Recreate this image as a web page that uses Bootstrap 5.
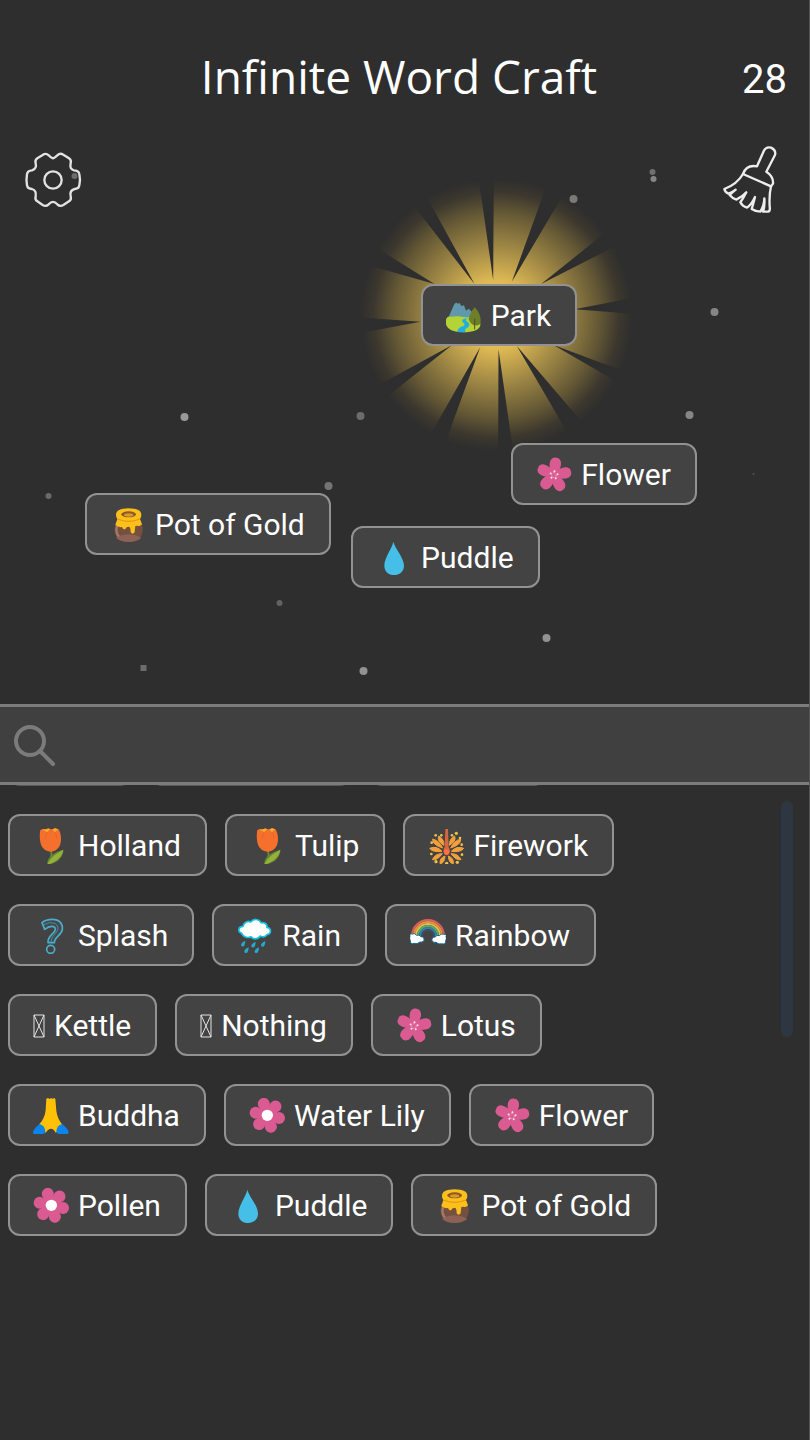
<!DOCTYPE html>
<html lang="en">
<head>
<meta charset="utf-8">
<meta name="viewport" content="width=device-width, initial-scale=1">
<title>Infinite Word Craft</title>
<link href="https://cdn.jsdelivr.net/npm/bootstrap@5.3.0/dist/css/bootstrap.min.css" rel="stylesheet">
<style>
  body { background: #2e2e2e; color: #fff; font-family: Roboto, "Noto Sans", sans-serif; border-right: 1px solid #555; }
  .board { min-height: 620px; }
  .board-head { padding: 44px 22px 0 11px; height: 108px; }
  .game-title { font-family: "Open Sans", "Noto Sans", sans-serif; font-size: 46px; line-height: 64px; font-weight: 400; }
  .found-count { font-size: 40px; line-height: 64px; }
  .tool-row { padding: 36px 28px 0 24px; }
  .tool-btn { background: none; border: 0; padding: 0; line-height: 0; }
  .sky { pointer-events: none; }
  .word { display: inline-flex; align-items: center; gap: 9px; height: 62px; padding: 2px 24px 0 23px; border: 2px solid #929292; border-radius: 12px;
    background: #434343; color: #fff; font-size: 30px; line-height: 36px; white-space: nowrap; }
  .word svg { width: 36px; height: 36px; overflow: visible; flex: none; }
  .word svg.missing { width: 12px; height: 24px; }
  .placed { position: absolute; }
  .at-park { left: 52%; top: 284px; }
  .at-flower { left: 63.2%; top: 443px; }
  .at-pot { left: 10.5%; top: 493px; }
  .at-puddle { left: 43.4%; top: 526px; }
  .search-bar { background: #404040; border-top: 3px solid #7c7c7c; border-bottom: 3px solid #7c7c7c; height: 81px; padding-left: 14px; }
  .search-bar input { background: transparent; border: 0; color: #fff; font-size: 30px; outline: 0; }
  .shelf { padding: 0 60px 204px 8px; }
  .shelf-words { gap: 28px 18px; margin-top: -61px; }
  .word-a { width: 124px; } .word-b { width: 202px; } .word-c { width: 176px; }
  .word-a, .word-b, .word-c { border-color: #5a5a5a; }
  .thumb { right: 16px; top: 16px; width: 12px; height: 236px; border-radius: 6px; background: #2e3741; }
</style>
</head>
<body class="d-flex flex-column min-vh-100 overflow-x-hidden">

<svg width="0" height="0" class="position-absolute" aria-hidden="true">
  <symbol id="tulip" viewBox="0 0 108 108">
    <path d="M54 66C57 80 55 90 50 100" fill="none" stroke="#6f8d2c" stroke-width="5"/>
    <path d="M43 110C41 90 58 74 91 65C92 84 76 106 43 110Z" fill="#5d8a33"/>
    <path d="M43 110C48 94 64 80 91 65C88 86 70 102 43 110Z" fill="#9aae3c"/>
    <path d="M22 8Q30 0 38 4L46 1L56 5L66 0L74 3L78 8L70 20H30Z" fill="#ffa726"/>
    <path d="M22 7C20 16 20 26 21 36C23 58 36 71 54 71C74 70 84 54 84 34C84 20 81 11 77 4Q70 7 66 13Q61 5 52 3Q46 8 43 13Q34 9 29 3Z" fill="#f4702c"/>
    <path d="M43 13Q37 22 36 34M66 13Q71 22 72 32" fill="none" stroke="#e2601f" stroke-width="2"/>
  </symbol>
  <symbol id="firework" viewBox="0 0 108 108">
    <g fill="#f2a03d" stroke="#f2a03d" stroke-width="3" stroke-linejoin="round">
      <path d="M44 60Q34 38 14 33Q12 50 44 60Z"/>
      <path d="M42 70Q26 52 5 61Q14 74 42 70Z"/>
      <path d="M43 77Q22 76 13 95Q28 98 43 77Z"/>
      <path d="M51 84Q34 90 36 107Q50 106 51 84Z"/>
      <path d="M48 52Q48 32 32 24Q26 40 48 52Z"/>
      <path d="M68 60Q78 38 98 33Q100 50 68 60Z"/>
      <path d="M70 70Q86 52 107 61Q98 74 70 70Z"/>
      <path d="M69 77Q90 76 99 95Q84 98 69 77Z"/>
      <path d="M61 84Q78 90 76 107Q62 106 61 84Z"/>
      <path d="M64 52Q64 32 80 24Q86 40 64 52Z"/>
    </g>
    <path d="M52 3H60L62 58C70 68 64 82 56 82C48 82 42 68 50 58Z" fill="#d9653f"/>
    <circle cx="56" cy="72" r="8" fill="#ff7043"/>
    <g fill="#e6c34a"><circle cx="23" cy="22" r="4"/><circle cx="40" cy="22" r="4"/><circle cx="72" cy="22" r="4"/><circle cx="85" cy="16" r="5"/><circle cx="96" cy="30" r="4"/><circle cx="11" cy="44" r="4"/><circle cx="101" cy="50" r="4"/><circle cx="10" cy="78" r="4"/><circle cx="102" cy="80" r="4"/><circle cx="24" cy="101" r="5"/><circle cx="56" cy="106" r="5"/><circle cx="88" cy="103" r="5"/></g>
  </symbol>
  <symbol id="question" viewBox="0 0 108 108">
    <path d="M27 14Q38 4 58 4C80 4 90 18 88 34C86 52 64 56 64 74H45C43 52 66 48 67 34C68 22 50 22 35 34Z" fill="#434a4d" stroke="#4badcc" stroke-width="5" stroke-linejoin="round"/>
    <path d="M32 20Q50 10 66 16Q80 26 72 40C64 52 55 56 54 72" fill="none" stroke="#4badcc" stroke-width="2"/>
    <circle cx="53" cy="94" r="12" fill="none" stroke="#4badcc" stroke-width="5"/>
  </symbol>
  <symbol id="rain" viewBox="0 0 108 108">
    <path d="M14 46C2 42 2 26 18 25C20 12 34 8 41 12C50 0 68 3 72 14C84 12 92 20 90 28C104 30 104 48 90 50C84 58 74 58 70 54C62 66 46 64 42 56C30 62 18 56 14 46Z" fill="#fff" stroke="#12bfe0" stroke-width="5" stroke-linejoin="round"/>
    <g fill="#27a9c8"><path id="rd" d="M25 68Q8 76 13 84Q24 90 25 68Z"/><use href="#rd" x="31" y="3"/><use href="#rd" x="60" y="1"/><use href="#rd" x="10" y="20"/><use href="#rd" x="41" y="20"/></g>
  </symbol>
  <symbol id="rainbow" viewBox="0 0 108 108">
    <g fill="none" stroke-width="6">
      <path d="M6 66V54A48 48 0 0 1 102 54V66" stroke="#d9605a"/>
      <path d="M12 66V54A42 42 0 0 1 96 54V66" stroke="#f08a3c"/>
      <path d="M18 66V54A36 36 0 0 1 90 54V66" stroke="#e0c04a"/>
      <path d="M24 66V54A30 30 0 0 1 84 54V66" stroke="#5aa86d"/>
      <path d="M30 66V54A24 24 0 0 1 78 54V66" stroke="#2b86a5"/>
      <path d="M36 66V54A18 18 0 0 1 72 54V66" stroke="#4a4a70" stroke-width="4"/>
    </g>
    <g fill="#fff" stroke="#17668c" stroke-width="3">
      <path id="cl" d="M0 54Q-4 46 8 48Q14 44 20 52Q28 48 32 56Q44 56 42 68Q36 74 30 72Q20 80 14 76Q0 80 1 68Q-3 60 0 54Z"/>
      <use href="#cl" transform="translate(108 1) scale(-1 1)"/>
    </g>
  </symbol>
  <symbol id="sakura" viewBox="0 0 108 108">
    <g fill="#da5b91" transform="rotate(7 54 54)">
      <path id="pt" d="M54 62C42 46 34 28 38 13C42 3 48 1 54 2C60 1 66 3 70 13C74 28 66 46 54 62Z"/>
      <use href="#pt" transform="rotate(72 54 54)"/><use href="#pt" transform="rotate(144 54 54)"/><use href="#pt" transform="rotate(216 54 54)"/><use href="#pt" transform="rotate(288 54 54)"/>
    </g>
    <g fill="#fce4ec" transform="rotate(7 54 54)">
      <circle id="sd" cx="54" cy="43" r="3"/><use href="#sd" transform="rotate(72 54 54)"/><use href="#sd" transform="rotate(144 54 54)"/><use href="#sd" transform="rotate(216 54 54)"/><use href="#sd" transform="rotate(288 54 54)"/>
    </g>
    <circle cx="54" cy="54" r="7" fill="none" stroke="#f8bbd0" stroke-width="2" stroke-dasharray="5 4"/>
  </symbol>
  <symbol id="rosette" viewBox="0 0 108 108">
    <g fill="#da5b91">
      <g id="rp"><circle cx="90" cy="60" r="18"/><circle cx="72" cy="56" r="17"/></g>
      <use href="#rp" transform="rotate(60 55 52)"/><use href="#rp" transform="rotate(120 55 52)"/><use href="#rp" transform="rotate(180 55 52)"/><use href="#rp" transform="rotate(240 55 52)"/><use href="#rp" transform="rotate(300 55 52)"/>
    </g>
    <circle cx="55" cy="52" r="17" fill="#fff"/>
  </symbol>
  <symbol id="drop" viewBox="0 0 108 108">
    <path d="M52 5C56 24 84 52 84 77C84 95 70 105 54 105C38 105 25 95 25 77C25 52 49 24 52 5Z" fill="#45bfe8"/>
  </symbol>
  <symbol id="honey" viewBox="0 0 108 108">
    <path d="M20 46C8 62 10 105 56 105C102 105 104 62 92 46Z" fill="#75503f"/>
    <path d="M22 56C16 68 20 86 30 90" stroke="#a3796a" stroke-width="7" fill="none" stroke-linecap="round"/>
    <path d="M18 92Q56 72 94 92Q80 105 56 105Q32 105 18 92Z" fill="#8d6155"/>
    <path d="M18 24Q18 4 56 4Q94 4 94 24Q94 32 90 36L96 52Q90 60 82 56L76 57Q75 64 74 76Q68 84 62 76Q62 62 58 60Q50 58 46 66Q40 70 36 60Q26 62 16 54L22 36Q18 32 18 24Z" fill="#fdc01b"/>
    <path d="M22 36Q56 50 90 36" fill="none" stroke="#e09a12" stroke-width="4"/>
    <ellipse cx="56" cy="22" rx="22" ry="9" fill="#8a5a22"/><ellipse cx="56" cy="24" rx="14" ry="5" fill="#d99a2b"/>
  </symbol>
  <symbol id="hands" viewBox="0 0 108 108">
    <path d="M40 2L45 0L50 3L54 0L59 2L64 0L67 3L70 38Q72 60 88 80Q80 98 68 104Q62 92 54 92Q46 92 38 104Q26 96 18 80Q36 60 38 36Z" fill="#ffc107"/>
    <path d="M20 78Q34 82 37 98Q36 108 28 108H2Q-1 104 1 98Q8 86 20 78Z" fill="#0b84ee"/>
    <path d="M87 78Q73 82 70 98Q71 108 79 108H105Q108 104 106 98Q99 86 87 78Z" fill="#0b84ee"/>
  </symbol>
  <symbol id="park" viewBox="0 0 108 108">
    <path d="M4 66L24 20Q30 10 36 18L40 14L46 24L54 22L60 38L68 32L76 40L92 60V70H4Z" fill="#6099ac"/>
    <path d="M-1 72Q0 54 14 56Q36 52 56 58H96Q104 66 103 82Q98 103 52 103Q0 103 -1 72Z" fill="#b3d336"/>
    <path d="M66 60Q40 64 52 74Q62 82 46 86Q34 92 34 102Q46 104 58 102Q54 94 66 88Q76 78 62 70Q56 66 66 60Z" fill="#21aee2"/>
    <path d="M86 28Q72 44 68 64Q76 84 90 82Q106 84 104 64Q102 44 86 28Z" fill="#6d7f28"/>
    <path d="M86 62V94" stroke="#5a4a24" stroke-width="3"/>
  </symbol>
  <symbol id="tofu" viewBox="0 0 12 24">
    <path d="M1 1H11V23H1ZM1 1L11 23M11 1L1 23" fill="none" stroke="#e4e4e4" stroke-width="1"/>
  </symbol>
</svg>

<main class="board position-relative flex-grow-1">
  <svg class="sky position-absolute top-0 start-0 w-100 h-100" viewBox="0 0 810 704" preserveAspectRatio="xMidYMin slice" aria-hidden="true">
    <defs>
      <radialGradient id="glow" gradientUnits="userSpaceOnUse" cx="497" cy="315" r="136">
        <stop offset="0" stop-color="#f6cf5c"/><stop offset=".25" stop-color="#dfba54"/><stop offset=".5" stop-color="#a08845"/>
        <stop offset=".75" stop-color="#655935"/><stop offset=".9" stop-color="#3d382e"/><stop offset="1" stop-color="#2e2e2e"/>
      </radialGradient>
    </defs>
    <circle cx="497" cy="315" r="136" fill="url(#glow)"/>
    <g fill="#2e2e2e" transform="translate(350 170) scale(.33333)">
      <path d="M431 330L384 0H433ZM375 342L182 93L223 65ZM255 342L62 222L44 282ZM213 455L20 442V491ZM308 525L70 655L110 682ZM392 532L235 808L283 830ZM447 538L446 860H493ZM502 528L655 790L705 765ZM612 525L805 637L845 612ZM675 418L870 380V433ZM575 342L765 190L810 222ZM487 335L595 37L648 62Z"/>
    </g>
    <g fill="#868686">
      <circle cx="653" cy="172" r="3" fill="#707070"/><circle cx="654" cy="179" r="3"/><circle cx="574" cy="199" r="4" fill="#7c7a74"/><circle cx="715" cy="312" r="4"/>
      <circle cx="185" cy="417" r="4" fill="#999"/><circle cx="361" cy="416" r="4" fill="#6c6c6c"/><circle cx="690" cy="415" r="4"/><circle cx="49" cy="496" r="3" fill="#6a6a6a"/>
      <circle cx="329" cy="486" r="4" fill="#747474"/><circle cx="280" cy="603" r="3" fill="#626262"/><circle cx="547" cy="638" r="4" fill="#929292"/><path d="M141 665h6v6h-6z" fill="#6c6c6c"/>
      <circle cx="364" cy="671" r="4" fill="#929292"/><circle cx="754" cy="474" r="1" fill="#555"/><circle cx="75" cy="176" r="3" fill="#6c6c6c"/>
    </g>
  </svg>

  <header class="board-head position-relative d-flex">
    <div class="flex-fill w-25"></div>
    <h1 class="game-title m-0 text-nowrap">Infinite Word Craft</h1>
    <div class="found-count flex-fill w-25 text-end pt-1">28</div>
  </header>
  <div class="tool-row position-relative d-flex justify-content-between align-items-center">
    <button type="button" class="tool-btn" aria-label="Settings">
      <svg width="58" height="58" viewBox="72 363 174 174" fill="none" stroke="#e2e2e2" stroke-width="7" stroke-linejoin="round">
        <path d="M159 385Q166 383 172 376Q180 368 190 374L207 385Q215 390 212 400Q208 418 222 421Q236 421 238 432Q242 450 238 466Q236 477 224 477Q208 481 212 498Q215 509 207 514L190 525Q180 531 172 523Q159 508 146 523Q138 531 128 525L112 514Q104 509 107 499Q110 481 96 477Q83 477 81 466Q78 450 81 432Q83 422 96 421Q111 417 107 400Q104 390 112 385L128 375Q138 368 146 376Q152 383 159 385Z"/>
        <circle cx="159" cy="450" r="26"/>
      </svg>
    </button>
    <button type="button" class="tool-btn" aria-label="Clear board">
      <svg width="60" height="72" viewBox="948 343 180 216" fill="none" stroke="#ededed" stroke-width="7" stroke-linejoin="round" stroke-linecap="round">
        <path d="M1056 410L1076 365Q1083 350 1098 354Q1114 362 1110 376L1084 426Q1106 440 1104 462L1098 470L1014 433Q1024 404 1056 410Z"/>
        <path d="M1014 433Q996 464 958 478Q960 488 970 492Q980 490 992 480Q980 490 974 496Q984 508 994 510Q1012 502 1024 488Q1014 508 1006 518Q1012 530 1026 534Q1040 524 1050 502Q1044 526 1040 538Q1052 546 1066 546Q1078 526 1078 506Q1080 530 1074 546H1090Q1096 544 1094 530Q1092 496 1098 470"/>
      </svg>
    </button>
  </div>

  <button type="button" class="word placed at-park"><svg aria-hidden="true"><use href="#park"/></svg>Park</button>
  <button type="button" class="word placed at-flower"><svg aria-hidden="true"><use href="#sakura"/></svg>Flower</button>
  <button type="button" class="word placed at-pot"><svg aria-hidden="true"><use href="#honey"/></svg>Pot of Gold</button>
  <button type="button" class="word placed at-puddle"><svg aria-hidden="true"><use href="#drop"/></svg>Puddle</button>
</main>

<form class="search-bar d-flex align-items-center position-relative z-1" role="search">
  <label for="wordSearch" class="lh-1" aria-label="Search words">
    <svg width="44" height="44" viewBox="0 0 44 44" fill="none" stroke="#7b7b7b" stroke-width="4" stroke-linecap="round" aria-hidden="true"><circle cx="16" cy="18" r="14"/><path d="M26 28L39 41"/></svg>
  </label>
  <input id="wordSearch" type="search" class="flex-grow-1 h-100">
</form>

<section class="shelf position-relative overflow-hidden">
  <div class="shelf-words d-flex flex-wrap">
    <div class="word word-a"></div><div class="word word-b"></div><div class="word word-c"></div>
    <button type="button" class="word"><svg aria-hidden="true"><use href="#tulip"/></svg>Holland</button>
    <button type="button" class="word"><svg aria-hidden="true"><use href="#tulip"/></svg>Tulip</button>
    <button type="button" class="word"><svg aria-hidden="true"><use href="#firework"/></svg>Firework</button>
    <button type="button" class="word"><svg aria-hidden="true"><use href="#question"/></svg>Splash</button>
    <button type="button" class="word"><svg aria-hidden="true"><use href="#rain"/></svg>Rain</button>
    <button type="button" class="word"><svg aria-hidden="true"><use href="#rainbow"/></svg>Rainbow</button>
    <button type="button" class="word"><svg class="missing" aria-hidden="true"><use href="#tofu"/></svg>Kettle</button>
    <button type="button" class="word"><svg class="missing" aria-hidden="true"><use href="#tofu"/></svg>Nothing</button>
    <button type="button" class="word"><svg aria-hidden="true"><use href="#sakura"/></svg>Lotus</button>
    <button type="button" class="word"><svg aria-hidden="true"><use href="#hands"/></svg>Buddha</button>
    <button type="button" class="word"><svg aria-hidden="true"><use href="#rosette"/></svg>Water Lily</button>
    <button type="button" class="word"><svg aria-hidden="true"><use href="#sakura"/></svg>Flower</button>
    <button type="button" class="word"><svg aria-hidden="true"><use href="#rosette"/></svg>Pollen</button>
    <button type="button" class="word"><svg aria-hidden="true"><use href="#drop"/></svg>Puddle</button>
    <button type="button" class="word"><svg aria-hidden="true"><use href="#honey"/></svg>Pot of Gold</button>
  </div>
  <div class="thumb position-absolute"></div>
</section>

<script src="https://cdn.jsdelivr.net/npm/bootstrap@5.3.0/dist/js/bootstrap.bundle.min.js"></script>
</body>
</html>
